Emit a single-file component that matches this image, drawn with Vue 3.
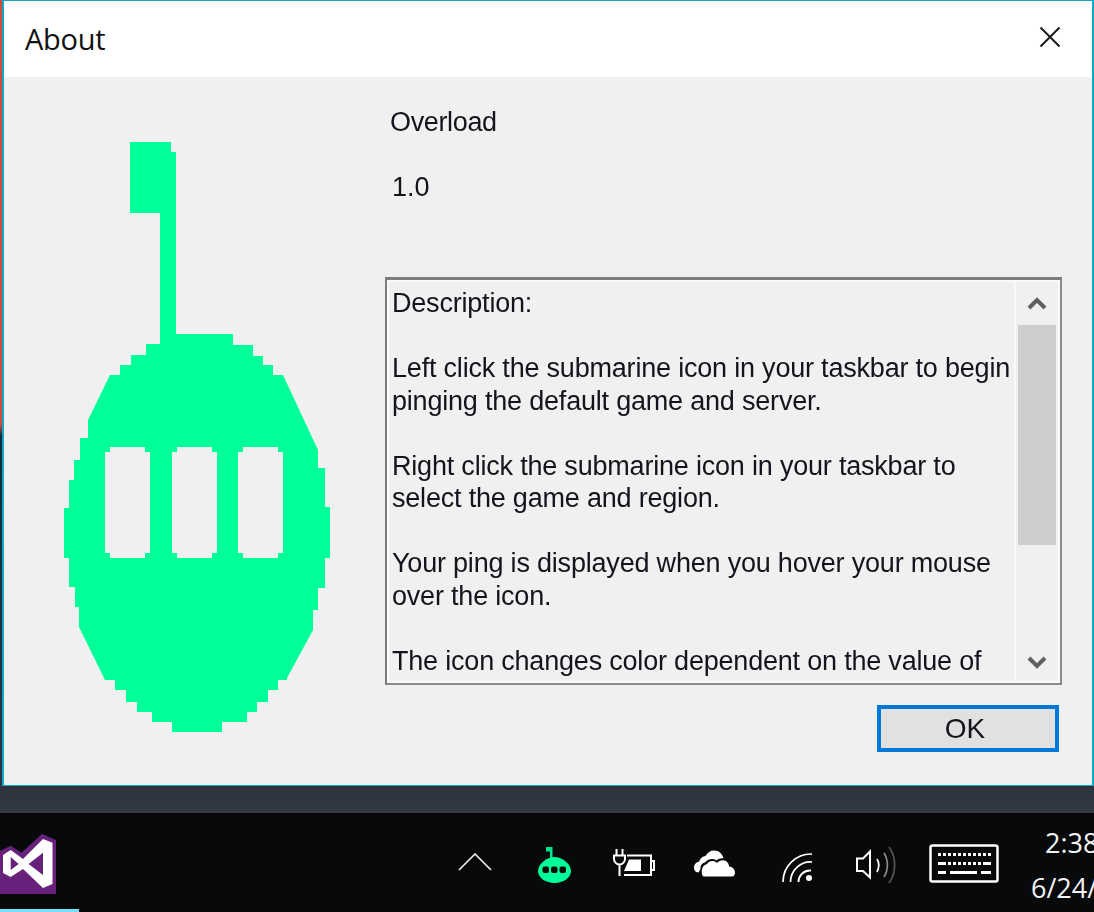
<script setup>
const paragraphs = [
  ['Description:'],
  ['Left click the submarine icon in your taskbar to begin', 'pinging the default game and server.'],
  ['Right click the submarine icon in your taskbar to', 'select the game and region.'],
  ['Your ping is displayed when you hover your mouse', 'over the icon.'],
  ['The icon changes color dependent on the value of']
]
const hull = 'M130 142H171V152H176V334H233V345H253V356H263V365H273V375H283L318 450V468H325V507H330V558H325V588H318V610H313V630L287 678V680H278V690H268V702H257V712H247V722H222V732H172V722H152V712H137V702H126V690H115V680H105L79 627V607H75V587H69V558H64V508H69V480H74V460H80V438H88V420L110 375H120V365H131V355H146V344H160V213H130Z'
const hole = (x) => `M${x + 5} 447H${x + 40}V452H${x + 45}V553H${x + 40}V558H${x + 5}V553H${x}V452H${x + 5}Z`
const logoPath = [hull, hole(105), hole(172), hole(238)].join('')
const keyRow = [0, 1, 2, 3, 4, 5, 6, 7, 8, 9, 10]
</script>

<template>
  <div class="screen">
    <section class="window">
      <i class="edge"></i>
      <header class="titlebar">
        <span class="title">About</span>
        <svg class="close" width="22" height="22" viewBox="0 0 22 22"><path d="M1.500 1.500 20.500 20.500M20.500 1.500 1.500 20.500" stroke="#1a1a1a" stroke-width="2" fill="none"/></svg>
      </header>
      <div class="content">
        <div class="logo-col">
          <svg class="logo" width="270" height="594" viewBox="62 140 270 594">
            <path :d="logoPath" fill="#00ff99" fill-rule="evenodd"/>
          </svg>
        </div>
        <div class="info">
          <p class="label name">Overload</p>
          <p class="label version">1.0</p>
          <div class="textbox">
            <div class="text">
              <p v-for="(para, i) in paragraphs" :key="i" class="para">
                <span v-for="line in para" :key="line" class="line">{{ line }}</span>
              </p>
            </div>
            <div class="scrollbar">
              <svg class="arrow" width="20" height="14" viewBox="0 0 20 14"><path d="M2 12 10 4 18 12" stroke="#606060" stroke-width="4" fill="none"/></svg>
              <div class="track"><div class="thumb"></div></div>
              <svg class="arrow" width="20" height="14" viewBox="0 0 20 14"><path d="M2 2 10 10 18 2" stroke="#606060" stroke-width="4" fill="none"/></svg>
            </div>
          </div>
          <div class="actions"><button class="ok" type="button">OK</button></div>
        </div>
      </div>
    </section>
    <div class="band"></div>
    <footer class="taskbar">
      <div class="start-app">
        <svg width="56" height="60" viewBox="0 834 56 60">
          <path d="M0 851 10.700 845.700 21.400 852.700 42 834 56 840V894H0Z" fill="#68217a"/>
          <path fill="#fff" fill-rule="evenodd" d="M3 855 10.700 850 23 859 43 839 52.500 842.700V884L43 888 23 869 10.700 877 3 873ZM43 852.700 28.600 864 43 875ZM10.700 857V870L18.600 864Z"/>
        </svg>
        <i class="active-bar"></i>
      </div>
      <div class="tray">
        <svg class="t-chevron" width="34" height="18" viewBox="0 0 34 18"><path d="M1 17 17 1 33 17" stroke="#f2f2f2" stroke-width="1.600" fill="none"/></svg>
        <svg class="t-sub" width="36" height="38" viewBox="0 0 36 38">
          <rect x="9" y="1" width="6" height="4.500" fill="#00e48a"/>
          <rect x="13" y="1" width="2.500" height="12" fill="#00e48a"/>
          <path fill="#00ff99" d="M17.500 11C25 11 34 18 34 25 34 32 26 37 17.500 37 9 37 1 32 1 25 1 18 10 11 17.500 11Z"/>
          <rect x="5.500" y="20.500" width="6.500" height="6.500" rx="2" fill="#08090b"/>
          <rect x="14" y="20.500" width="6.500" height="6.500" rx="2" fill="#08090b"/>
          <rect x="22.500" y="20.500" width="6.500" height="6.500" rx="2" fill="#08090b"/>
        </svg>
        <svg class="t-batt" width="42" height="28" viewBox="0 0 42 28">
          <path d="M3.500 0V7M9.500 0V7M1 6.500H12V10A5.500 5.500 0 0 1 1 10ZM6.500 15.500V27" stroke="#fff" stroke-width="2" fill="none"/>
          <path d="M14 6.500H38V26H11M38 12H41V21H38" stroke="#fff" stroke-width="2" fill="none"/>
          <path d="M16 10.500H28V22H11Z" fill="#fff"/>
        </svg>
        <svg class="t-cloud" width="42" height="27" viewBox="0 0 42 27">
          <path fill="#fff" d="M4.500 22.500C1 22.500 0 19.500 0 17.500 0 14.500 2 12 5 11.700 6 8.500 8.500 6.300 11.500 6 13.500 2.500 16.500 0.500 20 0.500 25 0.500 28.500 4 29.500 8.500 27.500 8 24.500 8.500 22.500 10.500 19.500 8 14 8.500 11 12.500 8 13 6 16 6.500 19Z"/>
          <path fill="#fff" d="M10 26.500C7.500 26.500 7.500 21 8 19.500 8.500 16.500 10.500 14.500 13 14 15 10.500 20 10 23 13 25 10.500 29 9.500 32 11 34 12.300 35 14.500 35 16.500 38.500 16.700 41 19.500 41 22.500 41 24.500 40 26.500 38 26.500Z"/>
        </svg>
        <svg class="t-wifi" width="32" height="32" viewBox="0 0 32 32">
          <g fill="none" stroke="#fff" stroke-width="1.700">
            <path d="M1 31A28 28 0 0 1 30 3"/>
            <path d="M8.500 31A20 20 0 0 1 30 11"/>
            <path d="M16.500 31A11.500 11.500 0 0 1 29 19.500" stroke-width="2"/>
          </g>
          <circle cx="27" cy="27" r="3" fill="#fff"/>
        </svg>
        <svg class="t-sound" width="42" height="38" viewBox="0 0 42 38">
          <path d="M1 12.500H7L14 5.500V31.500L7 25H1Z" stroke="#fff" stroke-width="2" fill="none"/>
          <path d="M21 13C23.500 17 23.500 21 21 26" stroke="#fff" stroke-width="1.700" fill="none"/>
          <path d="M28 7C32.500 14 32.500 24 28 31" stroke="#8a8a8a" stroke-width="1.700" fill="none"/>
          <path d="M33 1C40.500 11 40.500 27 33 37" stroke="#555" stroke-width="1.700" fill="none"/>
        </svg>
        <svg class="t-keys" width="70" height="40" viewBox="0 0 70 40">
          <rect x="1.500" y="1.500" width="67" height="36" rx="2" fill="none" stroke="#fff" stroke-width="2.500"/>
          <rect v-for="k in keyRow" :key="'a' + k" :x="9 + k * 5" y="9" width="3" height="3" fill="#fff"/>
          <rect x="9" y="18" width="8" height="3" fill="#fff"/>
          <rect v-for="k in 7" :key="'b' + k" :x="14 + k * 5" y="18" width="3" height="3" fill="#fff"/>
          <rect x="54" y="18" width="8" height="3" fill="#fff"/>
          <rect x="9" y="27" width="8" height="3" fill="#fff"/>
          <rect x="21" y="27" width="27" height="3" fill="#fff"/>
          <rect x="52" y="27" width="10" height="3" fill="#fff"/>
        </svg>
      </div>
      <div class="clock">
        <span class="time">2:38</span>
        <span class="date">6/24/</span>
      </div>
    </footer>
  </div>
</template>

<style scoped>
.screen {
  width: 1094px;
  height: 912px;
  overflow: hidden;
  display: flex;
  flex-direction: column;
  background: #08090b;
}
.window {
  position: relative;
  box-sizing: border-box;
  height: 786px;
  flex: none;
  display: flex;
  flex-direction: column;
  background: #f0f0f0;
  border-top: 1px solid #12a5c4;
  border-left: 4px solid #12a5c4;
  border-right: 2px solid #12a5c4;
  border-bottom: 1px solid #12a5c4;
}
.edge {
  position: absolute;
  left: -4px;
  top: -1px;
  bottom: -1px;
  width: 2px;
  background: linear-gradient(#d24a3a 0 424px, #0a2f40 436px, #2b3340 100%);
}
.titlebar {
  flex: none;
  box-sizing: border-box;
  height: 76px;
  background: #fff;
  display: flex;
  align-items: center;
  justify-content: space-between;
  padding: 0 31px 0 21px;
}
.title {
  font: 400 29px/1 "Open Sans", sans-serif;
  color: #111;
  letter-spacing: -0.25px;
  margin-bottom: 2px;
}
.close { display: block; margin-bottom: 4px; }
.content {
  flex: 1;
  display: flex;
  min-height: 0;
}
.logo-col {
  width: 381px;
  flex: none;
  padding: 63px 0 0 58px;
  box-sizing: border-box;
}
.logo { display: block; filter: blur(0.7px); }
.info {
  flex: 1;
  display: flex;
  flex-direction: column;
  font: 400 27px/32.5px "Liberation Sans", sans-serif;
  color: #14141c;
}
.label { margin: 0; padding-left: 5px; filter: blur(0.4px); }
.name { margin-top: 29px; letter-spacing: -0.35px; }
.version { margin-top: 32px; padding-left: 7px; }
.textbox {
  margin-top: 74px;
  width: 677px;
  height: 408px;
  box-sizing: border-box;
  flex: none;
  display: flex;
  border-style: solid;
  border-width: 3px 2px 2px 2px;
  border-color: #7c7c7c #8a8a8a #8a8a8a #7c7c7c;
  box-shadow: inset 0 0 0 2px #fafafa;
  background: #f0f0f0;
}
.text {
  flex: 1;
  padding: 7px 0 0 5px;
  overflow: hidden;
  filter: blur(0.4px);
  white-space: nowrap;
}
.para { margin: 0 0 32.5px; }
.line { display: block; letter-spacing: -0.2px; }
.scrollbar {
  width: 44px;
  flex: none;
  box-sizing: border-box;
  margin: 2px 2px 2px 0;
  border-left: 2px solid #fafafa;
  display: flex;
  flex-direction: column;
  align-items: center;
}
.arrow { display: block; flex: none; margin: 14px 0 11px; }
.arrow:first-child { margin-bottom: 15px; }
.track { flex: 1; width: 100%; padding: 0 2px; box-sizing: border-box; }
.thumb { height: 220px; background: #cdcdcd; }
.actions { display: flex; padding: 20px 0 0 492px; }
.ok {
  width: 182px;
  height: 47px;
  box-sizing: border-box;
  border: 4px solid #0078d7;
  background: #e1e1e1;
  font: 400 28px/1 "Liberation Sans", sans-serif;
  color: #14141c;
  padding: 0 6px 0 0;
  filter: blur(0.3px);
}
.band {
  flex: none;
  height: 27px;
  background: linear-gradient(#2d323c, #333946);
}
.taskbar {
  flex: 1;
  display: flex;
  background: #08090b;
  overflow: hidden;
}
.start-app {
  position: relative;
  width: 79px;
  flex: none;
  padding-top: 21px;
}
.start-app svg { display: block; }
.active-bar {
  position: absolute;
  left: 0;
  right: 0;
  bottom: 0;
  height: 3px;
  background: #76e0ff;
}
.tray {
  flex: none;
  display: flex;
  align-items: flex-start;
}
.tray svg { display: block; flex: none; }
.t-chevron { margin: 40px 0 0 379px; }
.t-sub { margin: 33px 0 0 45px; }
.t-batt { margin: 36px 0 0 40px; }
.t-cloud { margin: 37px 0 0 39px; }
.t-wifi { margin: 38px 0 0 46px; }
.t-sound { margin: 33px 0 0 42px; }
.t-keys { margin: 31px 0 0 31px; }
.clock {
  margin-left: 32px;
  width: 120px;
  flex: none;
  display: flex;
  flex-direction: column;
  align-items: flex-start;
  font: 400 27px/1 "Open Sans", sans-serif;
  color: #f2f2f2;
  white-space: nowrap;
  padding-top: 16px;
}
.time { margin-left: 14px; }
.date { margin-top: 18px; }
</style>
